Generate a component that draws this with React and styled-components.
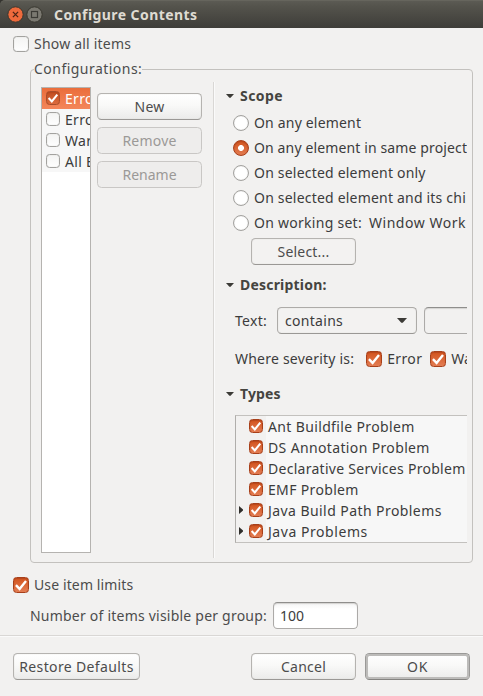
import React from 'react';
import styled, { createGlobalStyle, css } from 'styled-components';

const Global = createGlobalStyle`
  * { box-sizing: border-box; }
  body { margin: 0; background: #f2f1f0; }
`;

const Dialog = styled.div`
  width: 483px;
  height: 696px;
  overflow: hidden;
  display: flex;
  flex-direction: column;
  background: #f2f1f0;
  color: #4c4c4c;
  font: 14px/20px 'Noto Sans', sans-serif;
`;

const Label = styled.span`
  flex: none;
  white-space: pre;
  line-height: 20px;
  letter-spacing: ${(p) => p.$ls || 0}px;
  font-weight: ${(p) => (p.$bold ? 700 : 400)};
`;

const TitleBar = styled.header`
  flex: none;
  height: 28px;
  padding: 0 0 0 7px;
  display: flex;
  align-items: center;
  gap: 2px;
  color: #dfdbd2;
  background: linear-gradient(#5c5b54, #54534c 20%, #3e3d39);
  border-top: 1px solid #66655d;
  border-radius: 5px 0 0 0;
`;

const TitleBacking = styled.div`
  flex: none;
  background: #34332f;
`;

const Title = styled(Label)`
  margin-left: 9px;
`;

const Body = styled.main`
  flex: none;
  height: 607px;
  padding: 8px 10px 0 13px;
  display: flex;
  flex-direction: column;
`;

const CheckLine = styled.div`
  flex: none;
  height: 16px;
  margin-top: ${(p) => p.$top || 0}px;
  display: flex;
  align-items: center;
  gap: 5px;
`;

const checked = css`
  border: 1px solid #a8401a;
  background: linear-gradient(#d2531d, #e37d53);
  box-shadow: inset 0 1px 1px #b8481c;
`;

const Box = styled.span`
  flex: none;
  width: ${(p) => p.$size}px;
  height: ${(p) => p.$size}px;
  margin-bottom: ${(p) => (p.$size === 14 ? 1 : 0)}px;
  display: flex;
  border: 1px solid #a3a29f;
  border-radius: 3.5px;
  background: linear-gradient(#f4f4f3, #fefefe);
  box-shadow: inset 0 0 1px #bdbcb9;
  ${(p) => p.$on && checked}
  ${(p) => p.$selected && css`
    border-color: #a94d2b;
    background: linear-gradient(#c04c20, #dc6a3d);
  `}
  svg { display: block; width: 100%; height: 100%; overflow: visible; }
`;

function Check({ size = 16, on, selected }) {
  return (
    <Box $size={size} $on={on} $selected={selected}>
      {on && (
        <svg viewBox="0 0 14 14">
          <path d="M1.9 7.1 L5.6 10.9 L12 3" fill="none" stroke="#fff" strokeWidth="2.4" />
        </svg>
      )}
    </Box>
  );
}

const Group = styled.fieldset`
  flex: none;
  width: 443px;
  height: 504px;
  margin: 7px 0 0 17px;
  padding: 0;
  min-width: 0;
  border: 1px solid #c3c1be;
  border-radius: 4px;
`;

const Legend = styled.legend`
  height: 20px;
  margin-left: 3px;
  padding: 0;
`;

const GroupContent = styled.div`
  display: flex;
  align-items: flex-start;
  padding: 3px 0 0 10px;
`;

const ConfigList = styled.div`
  width: 50px;
  height: 466px;
  margin-top: 5px;
  overflow: hidden;
  background: #fff;
  border: 1px solid #b5b3b0;
  color: #3c3c3c;
`;

const ConfigRow = styled.div`
  height: 21px;
  padding-left: 4px;
  display: flex;
  align-items: center;
  gap: 5px;
  background: ${(p) => (p.$selected ? 'linear-gradient(#ea6d3b, #f4865a)' : '#f7f7f7')};
  color: ${(p) => (p.$selected ? '#fff' : 'inherit')};
`;

const ButtonColumn = styled.div`
  display: flex;
  flex-direction: column;
  gap: 7px;
  margin: 11px 0 0 6px;
`;

const Button = styled.button`
  flex: none;
  width: ${(p) => p.$w || 105}px;
  height: 27px;
  padding: 0;
  color: #4c4c4c;
  font: inherit;
  border: 1px solid #b5b3b0;
  border-bottom-color: #9a9895;
  border-radius: 4.5px;
  background: linear-gradient(#ffffff, #f9f9f8 45%, #ebebea);
  box-shadow: inset 0 0 1px #c9c7c4;
  ${(p) => p.$flat && css`background: #f3f2f1;`}
  ${(p) => p.$primary && css`
    border-color: #9a9997;
    border-bottom-color: #858481;
    box-shadow: inset 0 0 0 2px #bcbbb9;
  `}
  &:disabled {
    color: #9b9997;
    border-color: #c9c7c5;
    background: #eeedec;
    box-shadow: none;
  }
`;

const Divider = styled.div`
  width: 2px;
  height: 476px;
  margin: 0 11px 0 11px;
  border-left: 1px solid #d9d7d5;
  border-right: 1px solid #fafafa;
`;

const Details = styled.div`
  width: 241px;
  height: 476px;
  overflow: hidden;
  display: flex;
  flex-direction: column;
  color: #3c3c3c;
`;

const SectionHead = styled.div`
  flex: none;
  height: 20px;
  margin-top: ${(p) => p.$top}px;
  display: flex;
  align-items: center;
  gap: 6px;
  color: #45443f;
`;

const Down = ({ w = 8 }) => (
  <svg width={w} height={w / 2} viewBox="0 0 8 4">
    <path d="M0 0H8L4.6 3.7H3.4Z" fill="#3c3b37" />
  </svg>
);

const Section = ({ text, ls, top }) => (
  <SectionHead $top={top}>
    <Down />
    <Label $bold $ls={ls}>{text}</Label>
  </SectionHead>
);

const RadioList = styled.div`
  flex: none;
  margin-top: 4px;
`;

const RadioRow = styled.div`
  height: 25px;
  padding-left: 7px;
  display: flex;
  align-items: center;
  gap: 5px;
`;

const Radio = styled.span`
  flex: none;
  width: 16px;
  height: 16px;
  border-radius: 50%;
  border: 1px solid #a3a29f;
  background: #fff;
  box-shadow: inset 0 0 1px #bdbcb9;
  ${(p) => p.$on && css`
    border-color: #a8401a;
    background: radial-gradient(circle, #fff 2.6px, transparent 3.3px), linear-gradient(#d2551f, #e27b50);
    box-shadow: inset 0 1px 1px #b8481c;
  `}
`;

const WorkingSet = styled(Label)`
  margin-left: 2px;
`;

const ButtonIndent = styled.div`
  flex: none;
  display: flex;
  padding: 3px 0 0 25px;
`;

const FilterRow = styled.div`
  flex: none;
  height: 27px;
  margin-top: ${(p) => p.$top}px;
  padding-left: 9px;
  display: flex;
  align-items: center;
`;

const Combo = styled.div`
  flex: none;
  width: 140px;
  height: 27px;
  margin: 0 7px 0 10px;
  padding: 0 9px 0 7px;
  display: flex;
  align-items: center;
  justify-content: space-between;
  border: 1px solid #adaba8;
  border-bottom-color: #9a9895;
  border-radius: 4.5px;
  background: #f3f2f1;
  box-shadow: inset 0 0 1px #c9c7c4;
`;

const Field = styled.div`
  flex: none;
  width: ${(p) => p.$w}px;
  height: 27px;
  padding-left: 6px;
  display: flex;
  align-items: center;
  color: #3c3c3c;
  border: 1px solid #acaaa8;
  border-top-color: #8f8e8c;
  border-radius: 4.5px;
  background: ${(p) => (p.$plain ? '#f2f1f0' : 'linear-gradient(#f4f4f4, #fff 6px)')};
  box-shadow: inset 0 1px 1px #d4d3d1;
`;

const Severity = styled.div`
  flex: none;
  display: flex;
  align-items: center;
  gap: 5px;
  margin-left: ${(p) => p.$left}px;
`;

const Tree = styled.div`
  flex: none;
  height: 128px;
  margin: 11px 0 0 9px;
  border: 1px solid #c3c1be;
  border-left-color: #b0aeab;
  border-right: 0;
  background: linear-gradient(90deg, #f2f1f0 30px, #f7f7f7 30px);
`;

const TreeRow = styled.div`
  height: 21px;
  display: flex;
  align-items: center;
  gap: 5px;
`;

const Expander = styled.span`
  flex: none;
  width: 8px;
  height: 10px;
  margin-bottom: 1px;
  padding-left: 3px;
  display: flex;
  align-items: center;
`;

const LimitRow = styled.div`
  flex: none;
  height: 27px;
  margin: 9px 0 0 17px;
  display: flex;
  align-items: center;
  gap: 6px;
`;

const Footer = styled.footer`
  flex: none;
  height: 61px;
  padding: 17px 13px 0;
  display: flex;
  align-items: flex-start;
  gap: 9px;
  border-top: 1px solid #d9d7d5;
  box-shadow: inset 0 1px #fafafa;
`;

const Spacer = styled.div`
  flex: 1;
`;

const configs = [
  { id: 'first', name: 'Erro', selected: true },
  { id: 'second', name: 'Erro' },
  { id: 'third', name: 'War' },
  { id: 'fourth', name: 'All E' },
];

const types = [
  ['Ant Buildfile Problem', 0.36],
  ['DS Annotation Problem', 0.36],
  ['Declarative Services Problem', 0.28],
  ['EMF Problem', 0.34],
  ['Java Build Path Problems', 0.43, true],
  ['Java Problems', 0.55, true],
];

export default function App() {
  return (
    <Dialog>
      <Global />
      <TitleBacking>
        <TitleBar>
          <svg width="17" height="17" viewBox="0 0 17 17">
            <circle cx="8.5" cy="8.5" r="7.7" fill="#ee6a3c" stroke="#38372f" />
            <path d="M5.9 5.9l5.2 5.2M11.1 5.9l-5.2 5.2" stroke="#4a2415" strokeWidth="1.3" />
          </svg>
          <svg width="17" height="17" viewBox="0 0 17 17">
            <circle cx="8.5" cy="8.5" r="7.7" fill="#7b7971" stroke="#38372f" />
            <rect x="5.5" y="5.5" width="6" height="6" fill="none" stroke="#3b3a35" strokeWidth="1.2" />
          </svg>
          <Title $bold $ls={0.42}>Configure Contents</Title>
        </TitleBar>
      </TitleBacking>

      <Body>
        <CheckLine>
          <Check />
          <Label $ls={0.21}>Show all items</Label>
        </CheckLine>

        <Group>
          <Legend><Label $ls={0.47}>Configurations:</Label></Legend>
          <GroupContent>
            <ConfigList>
              {configs.map(({ id, name, selected }) => (
                <ConfigRow key={id} $selected={selected}>
                  <Check size={14} on={selected} selected={selected} />
                  <Label $ls={0.3}>{name}</Label>
                </ConfigRow>
              ))}
            </ConfigList>
            <ButtonColumn>
              <Button><Label $ls={0.24}>New</Label></Button>
              <Button disabled><Label $ls={0.2}>Remove</Label></Button>
              <Button disabled><Label>Rename</Label></Button>
            </ButtonColumn>
            <Divider />
            <Details>
              <Section text="Scope" ls={0.42} top={4} />
              <RadioList>
                <RadioRow><Radio /><Label $ls={0.18}>On any element</Label></RadioRow>
                <RadioRow><Radio $on /><Label $ls={0.13}>On any element in same project</Label></RadioRow>
                <RadioRow><Radio /><Label $ls={0.2}>On selected element only</Label></RadioRow>
                <RadioRow><Radio /><Label $ls={0.2}>On selected element and its chi</Label></RadioRow>
                <RadioRow>
                  <Radio />
                  <Label $ls={0.27}>On working set:</Label>
                  <WorkingSet $ls={0.53}>Window Work</WorkingSet>
                </RadioRow>
              </RadioList>
              <ButtonIndent><Button $flat><Label $ls={0.21}>Select...</Label></Button></ButtonIndent>

              <Section text="Description:" ls={0.2} top={10} />
              <FilterRow $top={12}>
                <Label $ls={0.27}>Text:</Label>
                <Combo><Label $ls={0.3}>contains</Label><Down w={10} /></Combo>
                <Field $w={120} $plain />
              </FilterRow>
              <FilterRow $top={11}>
                <Label $ls={0.22}>Where severity is:</Label>
                <Severity $left={12}><Check on /><Label $ls={0.35}>Error</Label></Severity>
                <Severity $left={8}><Check on /><Label>Wa</Label></Severity>
              </FilterRow>

              <Section text="Types" ls={0.1} top={12} />
              <Tree>
                {types.map(([name, ls, expandable]) => (
                  <TreeRow key={name}>
                    <Expander>
                      {expandable && (
                        <svg width="4" height="8" viewBox="0 0 4 8">
                          <path d="M0 0L4 3.4V4.6L0 8Z" fill="#2f2e2b" />
                        </svg>
                      )}
                    </Expander>
                    <Check size={14} on />
                    <Label $ls={ls}>{name}</Label>
                  </TreeRow>
                ))}
              </Tree>
            </Details>
          </GroupContent>
        </Group>

        <CheckLine $top={14}>
          <Check on />
          <Label $ls={0.12}>Use item limits</Label>
        </CheckLine>
        <LimitRow>
          <Label $ls={0.22}>Number of items visible per group:</Label>
          <Field $w={85}><Label>100</Label></Field>
        </LimitRow>
      </Body>

      <Footer>
        <Button $w={127}><Label $ls={0.36}>Restore Defaults</Label></Button>
        <Spacer />
        <Button><Label $ls={0.25}>Cancel</Label></Button>
        <Button $primary><Label $ls={0.7}>OK</Label></Button>
      </Footer>
    </Dialog>
  );
}
